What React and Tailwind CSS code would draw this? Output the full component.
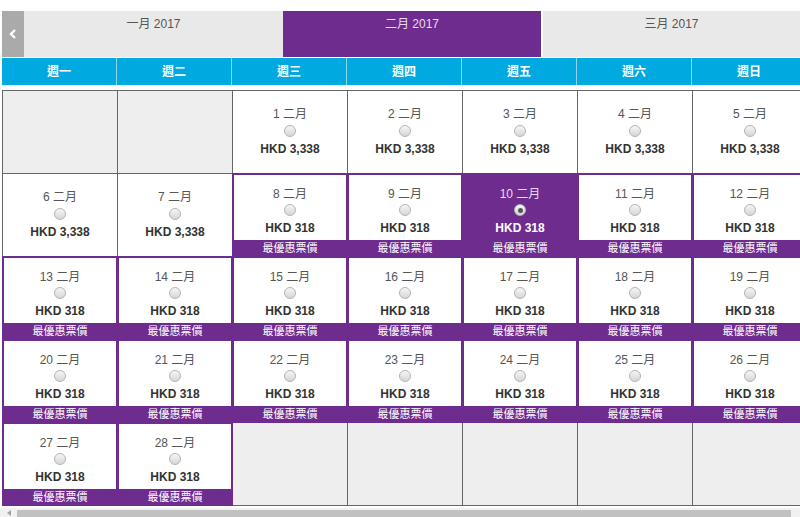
import React from "react";

const WEEK = ["週一", "週二", "週三", "週四", "週五", "週六", "週日"];

function Radio({ checked }) {
    return (
        <span className="flex h-[12px] w-[12px] items-center justify-center rounded-full border border-[#b4b4b4] bg-linear-to-b from-[#f6f6f6] to-[#d6d6d6]">
            {checked && <span className="h-[5px] w-[5px] rounded-full bg-[#555]" />}
        </span>
    );
}

function DayCell({ day }) {
    if (!day) return <div className="bg-[#eeeeee]" />;

    if (day < 8) {
        return (
            <div className="flex flex-col items-center bg-white pt-[15px]">
                <div className="h-4 text-[12px] leading-4 text-[#555]">{day} 二月</div>
                <div className="mt-[3px]"><Radio /></div>
                <div className="mt-[4px] text-[12px] font-bold leading-4 text-[#333]">HKD 3,338</div>
            </div>
        );
    }

    const selected = day === 10;
    return (
        <div className="flex flex-col bg-[#6f2c8f] px-[1px] pt-[1px] ring-1 ring-[#6f2c8f]">
            <div className={selected
                ? "flex flex-1 flex-col items-center pt-[11px]"
                : "flex flex-1 flex-col items-center bg-white pt-[11px]"}>
                <div className={selected ? "h-4 text-[12px] leading-4 text-[#e6dcef]" : "h-4 text-[12px] leading-4 text-[#555]"}>
                    {day} 二月
                </div>
                <div className="mt-[2px]"><Radio checked={selected} /></div>
                <div className={selected
                    ? "mt-[4px] text-[12px] font-bold leading-4 text-white"
                    : "mt-[4px] text-[12px] font-bold leading-4 text-[#333]"}>
                    HKD 318
                </div>
            </div>
            <div className="h-[16px] text-center text-[11px] leading-[16px] text-white">最優惠票價</div>
        </div>
    );
}

export default function App() {
    const cells = [null, null];
    for (let d = 1; d <= 28; d++) cells.push(d);
    while (cells.length < 35) cells.push(null);

    return (
        <div
            className="h-[517px] w-[800px] overflow-hidden bg-white"
            style={{ fontFamily: '"Liberation Sans", "Noto Sans CJK TC", sans-serif' }}
        >
            <div className="w-[808px] pl-[2px] pt-[11px]">
                {/* month tabs */}
                <div className="flex h-[46px] w-[798px]">
                    <div className="flex w-[22px] items-center justify-center bg-[#aaaaaa]">
                        <svg width="8" height="10" viewBox="0 0 8 10">
                            <path d="M6 1 L2 5 L6 9" fill="none" stroke="#fff" strokeWidth="2.4" />
                        </svg>
                    </div>
                    <div className="w-[259px] bg-[#e9e9e9] pt-[5px] text-center text-[12px] leading-4 text-[#555]">一月 2017</div>
                    <div className="w-[258px] bg-[#6f2c8f] pt-[5px] text-center text-[12px] leading-4 text-[#e8dcef]">二月 2017</div>
                    <div className="ml-[2px] flex-1 bg-[#e9e9e9] pt-[5px] text-center text-[12px] leading-4 text-[#555]">三月 2017</div>
                </div>

                {/* weekday header */}
                <div className="mt-[1px] grid h-[27px] grid-cols-[repeat(7,114px)] gap-px bg-[#8ed6f0]">
                    {WEEK.map((w) => (
                        <div key={w} className="flex items-center justify-center bg-[#00a9e0] text-[12px] font-bold text-white">
                            {w}
                        </div>
                    ))}
                </div>

                {/* calendar grid */}
                <div className="mt-[5px] grid w-max grid-cols-[repeat(7,114px)] auto-rows-[82px] gap-px border border-[#666] bg-[#666]">
                    {cells.map((d, i) => (
                        <DayCell key={i} day={d} />
                    ))}
                </div>
            </div>

            {/* horizontal scrollbar */}
            <div className="mt-[2px] flex h-[9px] items-end bg-[#f1f1f1]">
                <div className="flex h-full w-[17px] items-center justify-center">
                    <svg width="4" height="6" viewBox="0 0 4 6">
                        <path d="M4 0 L0 3 L4 6 Z" fill="#a3a3a3" />
                    </svg>
                </div>
                <div className="h-[7px] w-[774px] bg-[#c1c1c1]" />
            </div>
        </div>
    );
}
